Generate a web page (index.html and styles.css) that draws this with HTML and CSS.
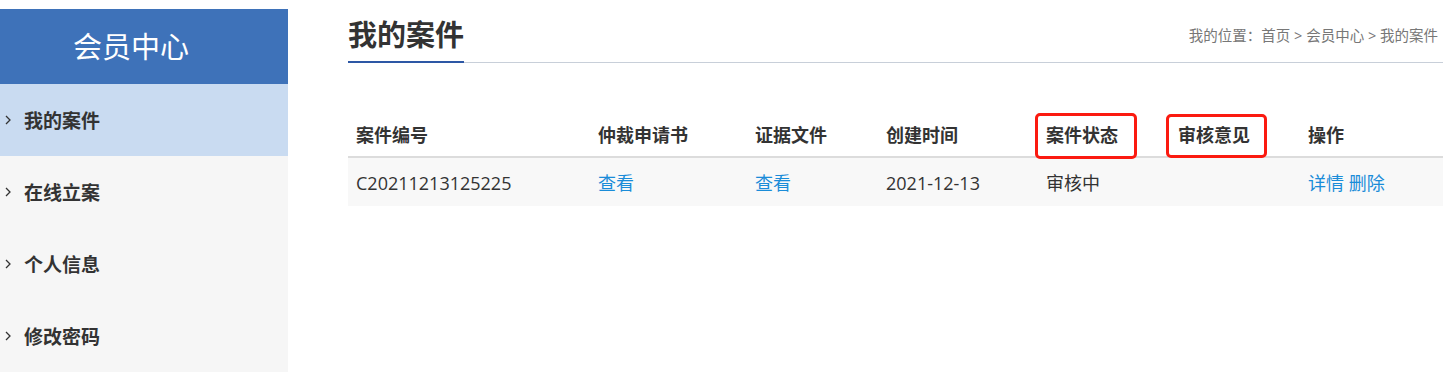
FILE: index.html
```html
<!DOCTYPE html>
<html lang="zh-CN">
<head>
<meta charset="utf-8">
<title>我的案件</title>
<link rel="stylesheet" href="styles.css">
</head>
<body>
<div class="page">
  <aside class="sidebar">
    <div class="side-title">会员中心</div>
    <ul class="side-nav">
      <li class="nav-item active"><svg class="chev" width="6" height="10" viewBox="0 0 6 10"><path d="M1 1l4 4-4 4" fill="none" stroke="#333" stroke-width="1.3"/></svg><span>我的案件</span></li>
      <li class="nav-item"><svg class="chev" width="6" height="10" viewBox="0 0 6 10"><path d="M1 1l4 4-4 4" fill="none" stroke="#333" stroke-width="1.3"/></svg><span>在线立案</span></li>
      <li class="nav-item"><svg class="chev" width="6" height="10" viewBox="0 0 6 10"><path d="M1 1l4 4-4 4" fill="none" stroke="#333" stroke-width="1.3"/></svg><span>个人信息</span></li>
      <li class="nav-item"><svg class="chev" width="6" height="10" viewBox="0 0 6 10"><path d="M1 1l4 4-4 4" fill="none" stroke="#333" stroke-width="1.3"/></svg><span>修改密码</span></li>
    </ul>
  </aside>
  <main class="main">
    <div class="main-head">
      <h1 class="main-title">我的案件</h1>
      <div class="crumb">我的位置：首页 &gt; 会员中心 &gt; 我的案件</div>
    </div>
    <table class="cases">
      <colgroup>
        <col class="c1"><col class="c2"><col class="c3"><col class="c4"><col class="c5"><col class="c6"><col class="c7">
      </colgroup>
      <thead>
        <tr>
          <th>案件编号</th>
          <th>仲裁申请书</th>
          <th>证据文件</th>
          <th>创建时间</th>
          <th><span class="mark mark-a">案件状态</span></th>
          <th><span class="mark mark-b">审核意见</span></th>
          <th>操作</th>
        </tr>
      </thead>
      <tbody>
        <tr>
          <td>C20211213125225</td>
          <td><a class="link" href="#">查看</a></td>
          <td><a class="link" href="#">查看</a></td>
          <td>2021-12-13</td>
          <td>审核中</td>
          <td></td>
          <td><a class="link" href="#">详情</a> <a class="link" href="#">删除</a></td>
        </tr>
      </tbody>
    </table>
  </main>
</div>
</body>
</html>
```

FILE: styles.css
```css
* { box-sizing: border-box; }
html, body { margin: 0; padding: 0; background: #fff; }
body {
  font-family: "Open Sans", "Noto Sans CJK SC", sans-serif;
  color: #333;
}
.page {
  display: flex;
  align-items: flex-start;
  width: 1443px;
  overflow: hidden;
}
.sidebar {
  width: 288px;
  flex: 0 0 288px;
  margin-top: 9px;
  background: #f6f6f6;
}
.side-title {
  height: 75px;
  background: #3e72b9;
  color: #fff;
  font-size: 29px;
  line-height: 75px;
  padding-left: 73px;
  font-weight: 400;
}
.side-nav {
  list-style: none;
  margin: 0;
  padding: 0;
}
.nav-item {
  height: 72px;
  display: flex;
  align-items: center;
  padding-left: 5px;
  font-size: 19px;
  font-weight: 700;
  color: #333;
}
.nav-item.active { background: #c9dbf1; }
.chev { margin-right: 13px; }
.main {
  flex: 1;
  margin-left: 60px;
  min-width: 0;
}
.main-head {
  display: flex;
  justify-content: space-between;
  align-items: flex-end;
  padding-top: 15px;
  border-bottom: 1px solid #c8cfd9;
}
.main-title {
  margin: 0 0 -1px 0;
  font-size: 29px;
  line-height: 40px;
  font-weight: 700;
  color: #333;
  padding-bottom: 6px;
  border-bottom: 2px solid #2d57a5;
}
.crumb {
  font-size: 14.5px;
  line-height: 20px;
  color: #777;
  margin-bottom: 16px;
  padding-right: 5px;
  white-space: nowrap;
}
.cases {
  margin-top: 50px;
  width: 1095px;
  border-collapse: collapse;
  table-layout: fixed;
  font-size: 18px;
}
.c1 { width: 242px; }
.c2 { width: 157px; }
.c3 { width: 131px; }
.c4 { width: 160px; }
.c5 { width: 132px; }
.c6 { width: 130px; }
.c7 { width: 143px; }
.cases th {
  text-align: left;
  font-weight: 700;
  height: 44px;
  padding: 0 0 0 8px;
  line-height: 24px;
  border-bottom: 2px solid #dcdcdc;
}
.cases td {
  background: #f8f8f8;
  height: 49px;
  padding: 1px 0 0 8px;
  line-height: 24px;
  white-space: nowrap;
}
.link { color: #1a8cd8; text-decoration: none; }
.mark {
  position: relative;
  display: inline-block;
  line-height: 24px;
}
.mark::after {
  content: "";
  position: absolute;
  border: 3px solid #fb1a10;
  border-radius: 5px;
}
.mark-a::after { left: -11px; right: -19px; top: -10px; bottom: -12px; }
.mark-b::after { left: -12px; right: -17px; top: -9px; bottom: -11px; }
```
